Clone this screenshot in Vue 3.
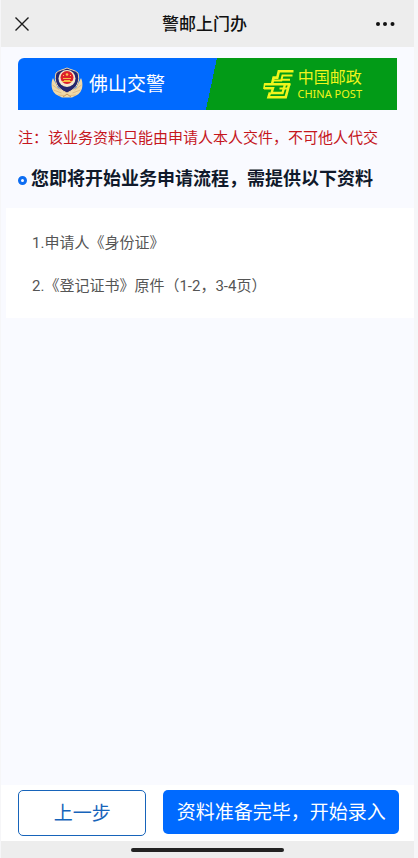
<script setup>
const documents = ['1.申请人《身份证》', '2.《登记证书》原件（1-2，3-4页）']
</script>

<template>
  <div class="page">
    <header class="navbar">
      <button class="icon-button" type="button" aria-label="关闭">
        <svg width="16" height="16" viewBox="0 0 16 16" fill="none" stroke="#1b1b1b" stroke-width="1.4" aria-hidden="true">
          <path d="M1.5 1.5 14.5 14.5M14.5 1.5 1.5 14.5" />
        </svg>
      </button>
      <h1>警邮上门办</h1>
      <button class="icon-button more" type="button" aria-label="更多">
        <svg width="20" height="6" viewBox="0 0 20 6" fill="#111" aria-hidden="true">
          <circle cx="3" cy="3" r="2" /><circle cx="10" cy="3" r="2" /><circle cx="17.5" cy="3" r="2" />
        </svg>
      </button>
    </header>

    <main>
      <section class="banner">
        <div class="police">
          <svg width="32" height="32" viewBox="0 0 32 32" aria-hidden="true">
            <path d="M2 11C-.5 16 0 25 6 28l5 2.500h10l5-2.500c6-3 6.500-12 4-17l-5 10-9 4-9-4Z" fill="#f0d9a8" />
            <path d="M1.500 18l7 5M2.500 23l8 3M7 28l6 .5M30.500 18l-7 5M29.500 23l-8 3M25 28l-6 .5" stroke="#d9b27c" stroke-width=".8" />
            <path d="M12 30l4-3 4 3" stroke="#c79355" stroke-width="1" fill="none" />
            <path d="M16 1C12 3 8 3 5 6c-2 8 0 15 11 20C27 21 29 14 27 6c-3-3-7-3-11-5Z" fill="#25276f" stroke="#f3d6a4" stroke-width="1" />
            <circle cx="16" cy="11.500" r="8.500" fill="#f7e8cc" />
            <circle cx="16" cy="10.500" r="6.500" fill="#dd1f2b" />
            <circle cx="16" cy="7.500" r="1.300" fill="#ffc34f" />
            <path d="M12 11h8v1h-8Zm1 2h6v1h2v1H11v-1h2Z" fill="#f7b942" />
            <path d="M12 8h1v1h-1Zm7 0h1v1h-1Z" fill="#ffd34f" />
          </svg>
          <span>佛山交警</span>
        </div>
        <div class="post">
          <svg width="31" height="30" viewBox="0 0 31 30" fill="none" stroke="#f0f51c" stroke-width="2.6" aria-hidden="true">
            <path d="M30.500 2.300H15.800L14.300 8.600H10.600L9 15" />
            <path d="M29.500 6.500H19.500L18.300 11.500H10.500" stroke-width="2" />
            <path d="M27 10.700H18" stroke-width="2" />
            <path d="M27.500 15.300H1.200M1 19.300H10L8.500 24H19.500L22 15.500" stroke-width="2.400" />
            <path d="M1.700 14.500.9 20" stroke-width="1.600" />
            <path d="M16.500 19.500H25" stroke-width="2" />
            <path d="M26.300 15 22.700 28.200H5.500L7 23.500" />
          </svg>
          <div class="post-name">
            <span class="post-cn">中国邮政</span>
            <span class="post-en">CHINA POST</span>
          </div>
        </div>
      </section>

      <p class="notice">注：该业务资料只能由申请人本人交件，不可他人代交</p>
      <h2><span class="ring"></span>您即将开始业务申请流程，需提供以下资料</h2>
      <ul class="documents">
        <li v-for="item in documents" :key="item">{{ item }}</li>
      </ul>
    </main>

    <footer>
      <div class="actions">
        <button class="previous" type="button">上一步</button>
        <button class="start" type="button">资料准备完毕，开始录入</button>
      </div>
      <div class="home-area"><span class="home-bar"></span></div>
    </footer>
  </div>
</template>

<style>
body {
  background: #f6f6f8;
}
</style>

<style scoped>
.page {
  display: flex;
  flex-direction: column;
  box-sizing: border-box;
  min-height: 100vh;
  margin: 0 4px 0 1px;
  background: #f9faff;
  font-family: Roboto, "Noto Sans CJK SC", sans-serif;
}
button {
  margin: 0;
  padding: 0;
  font-family: inherit;
  cursor: pointer;
}
h1, h2, p, ul {
  margin: 0;
  padding: 0;
}
.navbar {
  display: flex;
  align-items: center;
  justify-content: space-between;
  height: 47px;
  padding: 0 19px 0 13px;
  background: #ededed;
}
h1 {
  font-size: 17px;
  line-height: 24px;
  font-weight: 500;
  color: #111;
}
.icon-button {
  display: flex;
  align-items: center;
  width: 24px;
  height: 24px;
  border: 0;
  background: transparent;
}
.more {
  justify-content: flex-end;
}
main {
  flex: 1;
}
.banner {
  display: flex;
  height: 52px;
  margin: 11px 17px 0;
  overflow: hidden;
  border-radius: 6px 0 0 0;
  background: linear-gradient(102deg, #006aff 51%, #029b17 51%);
  color: #fff;
}
.police, .post {
  display: flex;
  flex: 1;
  align-items: center;
}
.police {
  gap: 6px;
  padding: 0 0 3px 33px;
  font-size: 19px;
}
.post {
  justify-content: flex-end;
  gap: 4px;
  padding-right: 35px;
  color: #f0f51c;
}
.post-name {
  display: flex;
  flex-direction: column;
  align-items: center;
}
.post-cn {
  font-size: 16px;
  line-height: 18px;
}
.post-en {
  font-family: "Noto Sans", sans-serif;
  font-size: 11px;
  line-height: 13px;
}
.notice {
  margin: 16px 17px 0;
  font-size: 15px;
  line-height: 24px;
  white-space: nowrap;
  color: #c5161d;
}
h2 {
  display: flex;
  align-items: center;
  gap: 4px;
  margin: 16px 17px;
  font-size: 18px;
  line-height: 26px;
  font-weight: 700;
  white-space: nowrap;
  color: #10192b;
}
.ring {
  box-sizing: border-box;
  width: 9px;
  height: 9px;
  margin-top: 3px;
  border: 3px solid #0d6df2;
  border-radius: 50%;
}
.documents {
  display: flex;
  flex-direction: column;
  gap: 19px;
  margin-left: 5px;
  padding: 23px 26px 20px;
  background: #fff;
  list-style: none;
  font-size: 15px;
  line-height: 24px;
  color: #555;
}
.actions {
  display: flex;
  align-items: flex-start;
  gap: 17px;
  padding: 5px 15px 5px 17px;
  background: #fff;
}
.actions button {
  height: 46px;
  border-radius: 5px;
  font-size: 19px;
}
.actions .previous {
  flex: 127;
  padding-bottom: 3px;
  border: 1px solid #1764ba;
  background: #fff;
  color: #1764ba;
}
.actions .start {
  flex: 237;
  height: 44px;
  padding-bottom: 3px;
  border: 0;
  background: #006aff;
  color: #fff;
  white-space: nowrap;
}
.home-area {
  display: flex;
  justify-content: center;
  height: 17px;
  background: #ededed;
}
.home-bar {
  width: 153px;
  height: 4px;
  margin-top: 7px;
  border-radius: 2px;
  background: #222;
}
</style>
